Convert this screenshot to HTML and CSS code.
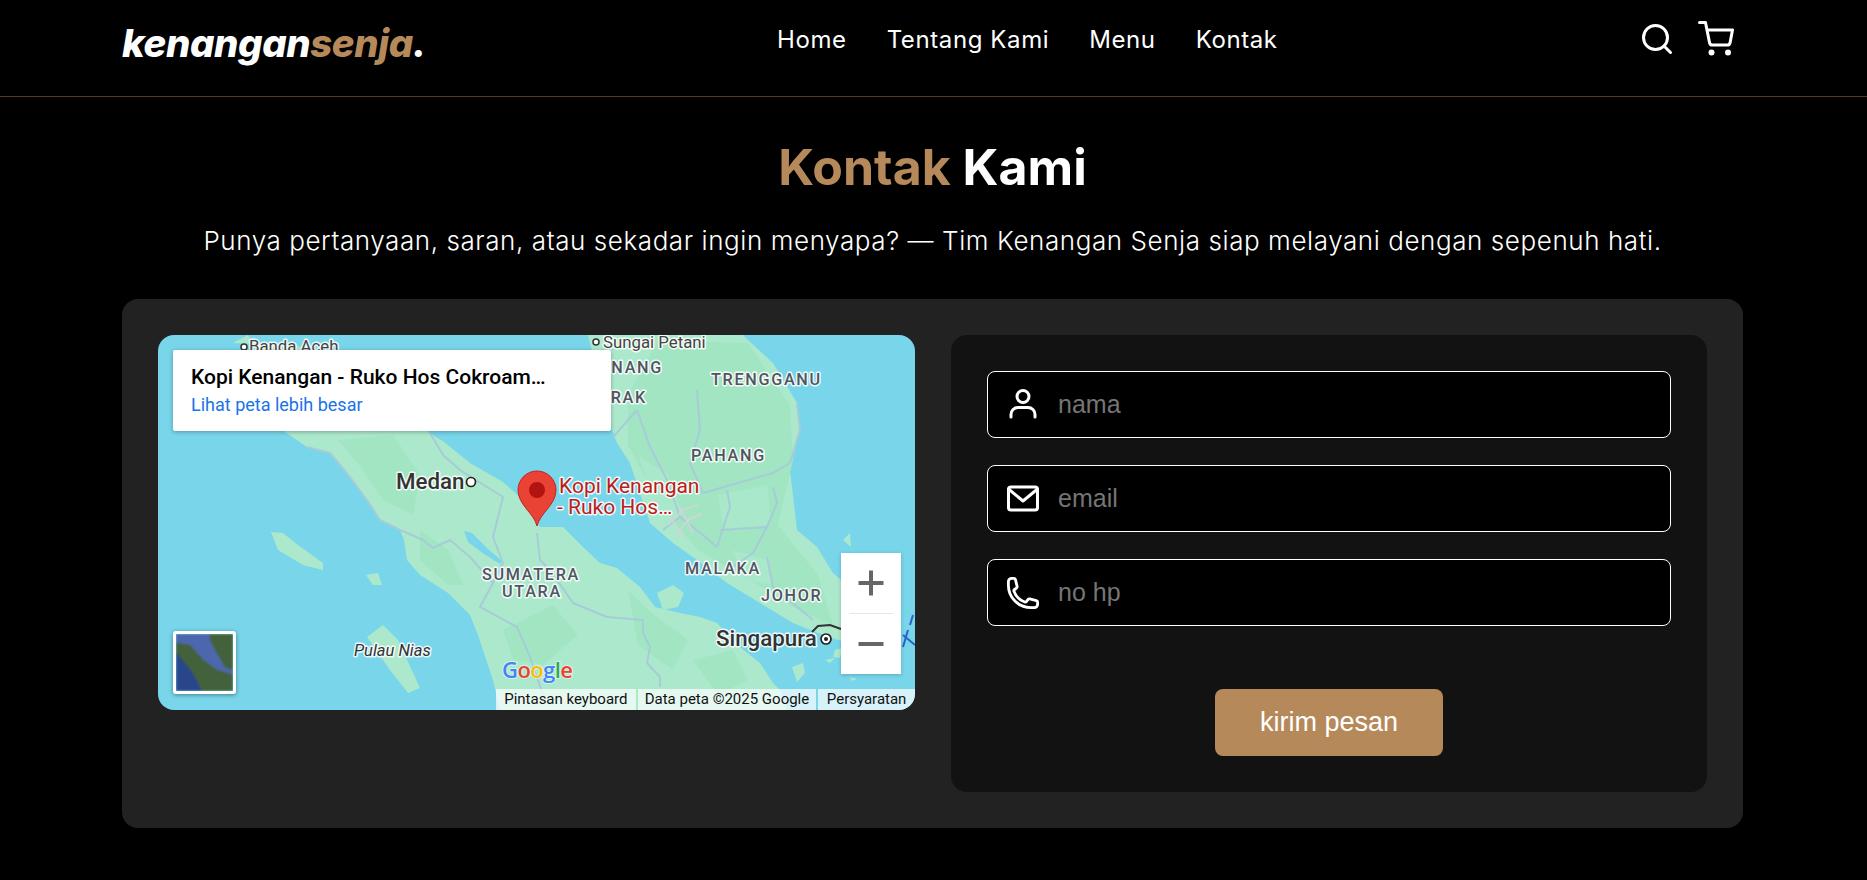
FILE: index.html
```html
<!DOCTYPE html>
<html lang="id">
<head>
<meta charset="utf-8">
<title>Kenangan Senja</title>
<link rel="stylesheet" href="styles.css">
</head>
<body>
<header class="site-header">
  <a class="logo" href="#">kenangan<span class="accent">senja</span>.</a>
  <nav class="nav">
    <a href="#">Home</a>
    <a href="#">Tentang Kami</a>
    <a href="#">Menu</a>
    <a href="#">Kontak</a>
  </nav>
  <div class="header-icons">
    <svg class="icon-top" viewBox="0 0 24 24"><circle cx="11" cy="11" r="8"/><line x1="21" y1="21" x2="16.65" y2="16.65"/></svg>
    <svg class="icon-top" viewBox="0 0 24 24"><circle cx="9" cy="21" r="1"/><circle cx="20" cy="21" r="1"/><path d="M1 1h4l2.68 13.39a2 2 0 0 0 2 1.61h9.72a2 2 0 0 0 2-1.61L23 6H6"/></svg>
  </div>
</header>
<main class="contact">
  <h2 class="title"><span class="accent">Kontak</span> Kami</h2>
  <p class="lead">Punya pertanyaan, saran, atau sekadar ingin menyapa? — Tim Kenangan Senja siap melayani dengan sepenuh hati.</p>
  <section class="card">
    <div class="map">
      <svg class="map-canvas" viewBox="0 0 757 375">
        <rect class="sea" width="757" height="375"/>
        <path class="land" d="M75,8 L90,0 L110,40 L127,97 L149,112 L172,118 L192,142 L209,165 L222,185 L242,195 L246,205 L249,225 L262,240 L290,258 L312,280 L320,300 L335,345 L342,375 L629,375 L622,355 L615,348 L602,328 L582,312 L559,288 L542,282 L522,278 L497,272 L482,252 L459,233 L442,228 L425,212 L405,192 L382,192 L365,165 L345,147 L312,128 L286,107 L270,97 L262,60 L200,20 L130,10 Z"/>
        <path class="land" d="M430,0 L454,95 L459,108 L472,128 L492,188 L515,208 L539,225 L569,248 L602,268 L635,288 L660,298 L680,305 L705,312 L700,260 L675,238 L659,212 L639,195 L632,135 L642,95 L639,68 L615,28 L590,5 L585,0 Z"/>
        <path class="land" d="M113,197 L125,198 L140,210 L165,228 L165,235 L145,230 L120,215 Z"/>
        <path class="land" d="M208,240 L220,238 L224,250 L215,250 Z"/>
        <path class="land" d="M209,302 L225,290 L240,305 L262,353 L250,358 L232,335 Z"/>
        <path class="land" d="M499,258 L515,250 L526,258 L520,272 L505,275 Z"/>
        <path class="land" d="M634,332 L645,328 L647,338 L639,347 Z"/>
        <path class="land" d="M667,325 L677,323 L672,328 Z"/>
        <path class="land" d="M677,315 L684,313 L682,323 L675,322 Z"/>
        <path class="land" d="M692,342 L699,344 L694,346 Z"/>
        <path class="land" d="M685,205 L692,198 L693,212 Z"/>
        <path class="forest" d="M180,105 L235,100 L262,140 L255,180 L225,165 L205,135 Z"/>
        <path class="forest" d="M262,195 L290,215 L305,250 L290,250 L262,225 Z"/>
        <path class="forest" d="M345,295 L395,270 L420,300 L385,330 L355,325 Z"/>
        <path class="forest" d="M470,255 L490,275 L530,305 L515,335 L480,310 Z"/>
        <path class="forest" d="M500,5 L590,8 L632,70 L635,125 L620,190 L660,240 L675,290 L640,275 L600,250 L540,215 L505,175 L470,110 L470,60 Z"/>
        <path class="light" d="M480,120 L510,140 L525,180 L505,190 Z"/>
        <path class="light" d="M560,160 L610,150 L612,190 L565,195 Z"/>
        <path class="light" d="M575,215 L610,225 L615,250 L585,245 Z"/>
        <path class="forest" d="M535,325 L575,315 L590,345 L560,360 Z"/>
        <path class="shallow" d="M306,196 L314,198 L330,214 L344,226 L342,229 L326,219 L310,207 Z"/>
        <path class="road" d="M149,112 L172,118 L192,142 L209,165 L222,185 L242,195 L265,205 L275,213 L292,205 L312,222 L335,248 L322,272 L359,292 L372,322 L385,360"/>
        <path class="road" d="M272,98 L285,120 L302,135 L329,152 L345,162 L335,202 L345,228 L335,248"/>
        <path class="road" d="M379,198 L382,225 L392,235 L415,268 L449,282 L485,285 L485,298 L492,312 L489,328 L502,342 L502,352"/>
        <path class="road" d="M479,75 L455,102 M479,75 L492,112 L509,145 L522,182 L545,200 L559,212"/>
        <path class="road" d="M539,55 L542,95 L532,128 L545,158 L615,138 L632,128 M569,155 L572,172 L559,212 M562,195 L609,192 L595,218 L570,235 M615,152 L619,168 L609,192 M609,222 L615,252 L655,285"/>
        <path class="road" d="M639,68 L642,95 L632,128 M522,182 L505,195"/>
        <path class="urban" d="M510,190 L525,175 L540,170 M518,200 L530,185 L544,178 M522,172 L535,198 M512,182 L528,205"/>
        <path class="rail" d="M654,297 L660,291 L672,290 L683,294"/>
        <path class="water-mark" d="M745,300 L757,310 M750,295 L745,312 M755,280 L752,290"/>
        <text class="place" x="91" y="17">Banda Aceh</text>
        <circle class="dot" cx="86" cy="12" r="3"/>
        <text class="place" x="445" y="13">Sungai Petani</text>
        <circle class="dot" cx="438" cy="7" r="3"/>
        <text class="region" x="505" y="38" text-anchor="end">PENANG</text>
        <text class="region" x="489" y="68" text-anchor="end">PERAK</text>
        <text class="region" x="553" y="50">TRENGGANU</text>
        <text class="region" x="533" y="126">PAHANG</text>
        <text class="region" x="373" y="245" text-anchor="middle">SUMATERA</text>
        <text class="region" x="374" y="262" text-anchor="middle">UTARA</text>
        <text class="region" x="527" y="239">MALAKA</text>
        <text class="region" x="603" y="266">JOHOR</text>
        <text class="city" x="238" y="154">Medan</text>
        <circle class="dot-big" cx="313" cy="147" r="4.5"/>
        <text class="city" x="558" y="311">Singapura</text>
        <circle class="dot-big" cx="668" cy="304" r="5"/>
        <circle class="dot-core" cx="668" cy="304" r="2"/>
        <text class="island" x="196" y="321">Pulau Nias</text>
        <path class="pin" d="M379,191 C376,178 360,170 360,155 A19,19 0 0 1 398,155 C398,170 382,178 379,191 Z"/>
        <circle class="pin-dot" cx="379" cy="155" r="8"/>
        <text class="pin-label" x="401" y="158">Kopi Kenangan</text>
        <text class="pin-label" x="399" y="179">- Ruko Hos…</text>
        <text class="google" x="344" y="343"><tspan class="g-b">G</tspan><tspan class="g-r">o</tspan><tspan class="g-y">o</tspan><tspan class="g-b">g</tspan><tspan class="g-g">l</tspan><tspan class="g-r">e</tspan></text>
      </svg>
      <div class="place-card">
        <div class="place-name">Kopi Kenangan - Ruko Hos Cokroam…</div>
        <a class="place-link" href="#">Lihat peta lebih besar</a>
      </div>
      <div class="thumb">
        <svg class="thumb-img" viewBox="0 0 57 57">
          <rect class="thumb-sea" width="57" height="57"/>
          <path class="thumb-deep" d="M0,17 L17,39 L26,57 L0,57 Z"/>
          <path class="thumb-land" d="M0,9 L14,11 L27,26 L41,36 L57,41 L57,57 L26,57 L17,39 L4,23 L0,19 Z"/>
          <path class="thumb-land" d="M34,0 L57,0 L57,36 L49,33 L41,19 L34,6 Z"/>
        </svg>
      </div>
      <div class="zoom-ctl">
        <svg class="zoom-icon" viewBox="0 0 60 60"><path d="M17.5 30h25M30 17.5v25"/></svg>
        <span class="zoom-sep"></span>
        <svg class="zoom-icon" viewBox="0 0 60 60"><path d="M17.5 30h25"/></svg>
      </div>
      <div class="attrib">
        <span class="attrib-item">Pintasan keyboard</span>
        <span class="attrib-item">Data peta ©2025 Google</span>
        <span class="attrib-item">Persyaratan</span>
      </div>
    </div>
    <form class="form">
      <div class="fields">
        <label class="field">
          <svg class="field-icon" viewBox="0 0 36 36"><circle cx="18" cy="9.5" r="6"/><path d="M6 30v-2.5a7 7 0 0 1 7-7h10a7 7 0 0 1 7 7V30"/></svg>
          <input class="field-input" type="text" placeholder="nama">
        </label>
        <label class="field">
          <svg class="field-icon" viewBox="0 0 36 36"><rect x="3.5" y="6" width="29" height="23" rx="2.5"/><path d="M3.5 8L18 20L32.5 8"/></svg>
          <input class="field-input" type="text" placeholder="email">
        </label>
        <label class="field">
          <svg class="field-icon" viewBox="0 0 24 24"><path class="thin" d="M2.25 6.75c0 8.284 6.716 15 15 15h2.25a2.25 2.25 0 002.25-2.25v-1.372c0-.516-.351-.966-.852-1.091l-4.423-1.106c-.44-.11-.902.055-1.173.417l-.97 1.293c-.282.376-.769.542-1.21.38a12.035 12.035 0 01-7.143-7.143c-.162-.441.004-.928.38-1.21l1.293-.97c.363-.271.527-.734.417-1.173L6.963 3.102a1.125 1.125 0 00-1.091-.852H4.5A2.25 2.25 0 002.25 4.5v2.25z"/></svg>
          <input class="field-input" type="text" placeholder="no hp">
        </label>
      </div>
      <button class="send" type="button">kirim pesan</button>
    </form>
  </section>
</main>
</body>
</html>
```

FILE: styles.css
```css
* { box-sizing: border-box; }
html, body { margin: 0; padding: 0; }
body {
  background: #000;
  color: #fff;
  font-family: Inter, "Noto Sans", sans-serif;
  height: 880px;
  overflow: hidden;
}
a { color: inherit; text-decoration: none; }
.accent { color: #b6895b; }

.site-header {
  height: 97px;
  padding: 0 122px;
  display: flex;
  align-items: center;
  border-bottom: 1px solid #4f3d28;
}
.logo {
  width: 655px;
  font-family: Inter, sans-serif;
  font-size: 38.4px;
  font-weight: 800;
  font-style: italic;
  letter-spacing: -0.4px;
  padding-bottom: 10px;
}
.nav {
  display: flex;
  gap: 40px;
  font-size: 24px;
  letter-spacing: 0.6px;
  font-weight: 400;
  padding-bottom: 18px;
  flex: 0 0 862px;
}
.header-icons { display: flex; gap: 23px; padding-bottom: 18px; }
.icon-top {
  width: 36px;
  height: 36px;
  fill: none;
  stroke: #fff;
  stroke-width: 2;
  stroke-linecap: round;
  stroke-linejoin: round;
}

.contact { width: 1621px; margin: 0 0 0 122px; }
.title {
  margin: 42px 0 0;
  text-align: center;
  font-size: 50px;
  font-weight: 700;
  line-height: 57px;
}
.lead {
  margin: 27px 0 0;
  text-align: center;
  font-size: 26px;
  letter-spacing: 0.58px;
  font-weight: 300;
  line-height: 36px;
}
.card {
  margin-top: 40px;
  height: 529px;
  padding: 36px;
  background: #222;
  border-radius: 16px;
  display: grid;
  grid-template-columns: 757px 756px;
  gap: 36px;
  align-items: start;
}

.map {
  position: relative;
  height: 375px;
  border-radius: 16px;
  overflow: hidden;
  font-family: Roboto, sans-serif;
}
.map-canvas { display: block; width: 757px; height: 375px; }
.sea { fill: #78d5ea; }
.land { fill: #ace9cc; }
.forest { fill: #a1e5c3; }
.light { fill: #a9e8ca; }
.shallow { fill: #78d5ea; }
.road { fill: none; stroke: #a7cbd8; stroke-width: 2; stroke-linejoin: round; }
.urban { fill: none; stroke: #c9d8d2; stroke-width: 2; }
.rail { fill: none; stroke: #333; stroke-width: 2; }
.water-mark { fill: none; stroke: #2a62c9; stroke-width: 2; }
.place, .region, .city, .island, .pin-label {
  font-family: Roboto, sans-serif;
  paint-order: stroke;
  stroke: #fff;
  stroke-opacity: .85;
  stroke-width: 3px;
  stroke-linejoin: round;
}
.place { font-size: 16.8px; fill: #444; }
.region { font-size: 16.2px; font-weight: 500; letter-spacing: 1.7px; fill: #505560; }
.city { font-size: 22.3px; font-weight: 500; fill: #333; }
.island { font-size: 16.5px; font-style: italic; fill: #333; }
.pin-label { font-size: 21px; fill: #bd1d1a; }
.dot { fill: #fff; stroke: #333; stroke-width: 1.5; }
.dot-big { fill: #fff; stroke: #222; stroke-width: 1.7; }
.dot-core { fill: #222; }
.pin { fill: #ea4335; stroke: #c5221f; stroke-width: 1; }
.pin-dot { fill: #b31412; }
.google { font-family: "Open Sans", sans-serif; font-size: 22px; font-weight: 600; letter-spacing: -0.6px; paint-order: stroke; stroke: #fff; stroke-opacity: .5; stroke-width: 2px; }
.g-b { fill: #4285f4; }
.g-r { fill: #ea4335; }
.g-y { fill: #fbbc04; }
.g-g { fill: #34a853; }

.place-card {
  position: absolute;
  left: 15px;
  top: 15px;
  width: 438px;
  height: 81px;
  padding: 14px 18px;
  background: #fff;
  border-radius: 2px;
  box-shadow: 0 1px 4px rgba(0,0,0,.3);
}
.place-name {
  color: #000;
  font-size: 21px;
  font-weight: 500;
  line-height: 27px;
  white-space: nowrap;
}
.place-link {
  display: block;
  color: #1a73e8;
  font-size: 18px;
  line-height: 24px;
  margin-top: 2px;
}
.thumb {
  position: absolute;
  left: 15px;
  top: 296px;
  width: 63px;
  height: 63px;
  border: 3px solid #fff;
  border-radius: 3px;
  box-shadow: 0 1px 4px rgba(0,0,0,.4);
  overflow: hidden;
}
.thumb-img { display: block; width: 57px; height: 57px; filter: blur(0.8px); }
.thumb-sea { fill: #4c67ad; }
.thumb-land { fill: #43613a; }
.thumb-deep { fill: #29458c; }
.zoom-ctl {
  position: absolute;
  left: 683px;
  top: 218px;
  width: 60px;
  height: 121px;
  background: #fff;
  box-shadow: 0 1px 4px rgba(0,0,0,.2);
  display: flex;
  flex-direction: column;
  align-items: center;
}
.zoom-icon {
  display: block;
  width: 60px;
  height: 60px;
  fill: none;
  stroke: #666;
  stroke-width: 4;
}
.zoom-sep { width: 44px; height: 1px; background: #e6e6e6; }
.attrib {
  position: absolute;
  right: 0;
  bottom: 0;
  height: 21px;
  width: 419px;
  display: flex;
  gap: 2px;
  font-size: 15px;
  line-height: 21px;
  color: #111;
}
.attrib-item {
  background: rgba(255,255,255,.7);
  padding: 0 7px;
  white-space: nowrap;
  text-align: center;
}
.attrib-item:nth-child(1) { width: 140px; }
.attrib-item:nth-child(2) { flex: 1; }
.attrib-item:nth-child(3) { width: 97px; }

.form {
  height: 457px;
  padding: 36px;
  background: #121212;
  border-radius: 16px;
  display: flex;
  flex-direction: column;
  align-items: center;
}
.fields {
  align-self: stretch;
  display: flex;
  flex-direction: column;
  gap: 27px;
}
.field {
  height: 67px;
  padding: 0 17px;
  background: #000;
  border: 1px solid #fff;
  border-radius: 8px;
  display: flex;
  align-items: center;
  gap: 17px;
}
.field-icon {
  flex: none;
  width: 36px;
  height: 36px;
  fill: none;
  stroke: #fff;
  stroke-width: 3;
  stroke-linecap: round;
  stroke-linejoin: round;
}
.thin { stroke-width: 1.9; }
.field-input {
  flex: 1;
  min-width: 0;
  background: transparent;
  border: 0;
  outline: 0;
  padding: 0;
  color: #fff;
  font-family: "Liberation Sans", Arial, sans-serif;
  font-size: 25px;
}
.field-input::placeholder { color: #757575; opacity: 1; }
.send {
  margin-top: 63px;
  width: 228px;
  height: 67px;
  border: 0;
  border-radius: 8px;
  background: #b6895b;
  color: #fff;
  font-family: "Liberation Sans", Arial, sans-serif;
  font-size: 27px;
}
```
